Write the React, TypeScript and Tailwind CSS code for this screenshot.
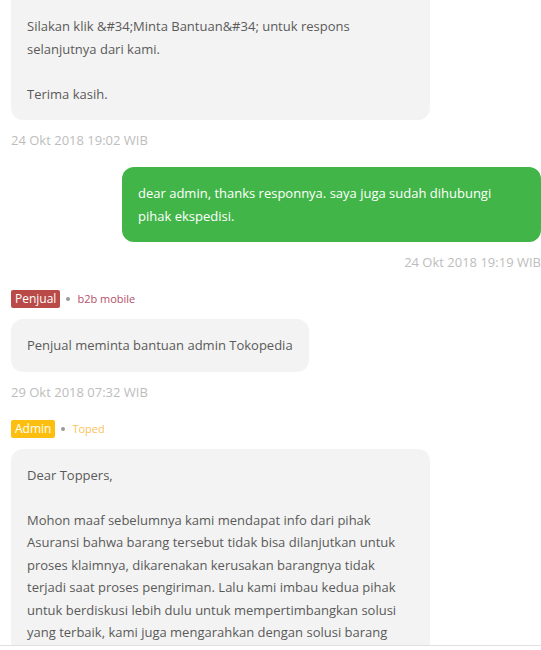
import React from "react";

const font = { fontFamily: '"Open Sans", "Noto Sans", sans-serif' };

function Stamp({ text, right }: { text: string; right?: boolean }) {
  return (
    <div
      className={`mt-[10px] h-[20px] text-[13px] leading-[20px] text-[#bdbdbd] ${right ? "text-right" : ""}`}
    >
      {text}
    </div>
  );
}

function Label({ badge, badgeBg, name, nameColor }: { badge: string; badgeBg: string; name: string; nameColor: string }) {
  return (
    <div className="mt-[18px] flex h-[18px] items-center">
      <span className={`h-[18px] rounded-[2px] px-[4px] text-[12px] leading-[18px] text-white ${badgeBg}`}>{badge}</span>
      <span className="ml-[6px] h-[4px] w-[4px] rounded-full bg-[#9a9a9a]" />
      <span className={`ml-[7px] text-[11px] leading-[18px] ${nameColor}`}>{name}</span>
    </div>
  );
}

export default function App() {
  return (
    <div className="flex h-[650px] w-[541px] flex-col overflow-hidden bg-white" style={font}>
      <div className="flex-1 overflow-hidden pl-[11px]">
        <div className="mt-[-22.5px] w-[419px] rounded-[12px] bg-[#f3f3f3] px-[16px] py-[15px] text-[13px] leading-[22.5px] text-[#5a5a5a]">
          <div>&nbsp;</div>
          <div>Silakan klik &amp;#34;Minta Bantuan&amp;#34; untuk respons selanjutnya dari kami.</div>
          <div>&nbsp;</div>
          <div>Terima kasih.</div>
        </div>
        <Stamp text="24 Okt 2018 19:02 WIB" />

        <div className="mt-[17px] flex justify-end">
          <div className="w-[419px] rounded-[12px] bg-[#42b549] px-[16px] py-[15px] text-[13px] leading-[22.5px] text-white">
            dear admin, thanks responnya. saya juga sudah dihubungi pihak ekspedisi.
          </div>
        </div>
        <Stamp text="24 Okt 2018 19:19 WIB" right />

        <Label badge="Penjual" badgeBg="bg-[#b94a48]" name="b2b mobile" nameColor="text-[#b2506b]" />
        <div className="mt-[11px] flex">
          <div className="rounded-[12px] bg-[#f3f3f3] px-[16px] py-[15px] text-[13px] leading-[22.5px] text-[#5a5a5a]">
            Penjual meminta bantuan admin Tokopedia
          </div>
        </div>
        <Stamp text="29 Okt 2018 07:32 WIB" />

        <Label badge="Admin" badgeBg="bg-[#fdbf0f]" name="Toped" nameColor="text-[#fdbf5a]" />
        <div className="mt-[11px] w-[419px] rounded-[12px] bg-[#f3f3f3] px-[16px] py-[15px] text-[13px] leading-[22.5px] text-[#5a5a5a]">
          <div>Dear Toppers,</div>
          <div>&nbsp;</div>
          <div>
            Mohon maaf sebelumnya kami mendapat info dari pihak Asuransi bahwa barang tersebut tidak bisa dilanjutkan untuk
            proses klaimnya, dikarenakan kerusakan barangnya tidak terjadi saat proses pengiriman. Lalu kami imbau kedua pihak
            untuk berdiskusi lebih dulu untuk mempertimbangkan solusi yang terbaik, kami juga mengarahkan dengan solusi barang
            dikembalikan ke penjual dan dana dikembalikan ke pembeli.
          </div>
        </div>
      </div>
      <div className="h-[5px] border-t border-[#e0e0e0] bg-white" />
    </div>
  );
}
